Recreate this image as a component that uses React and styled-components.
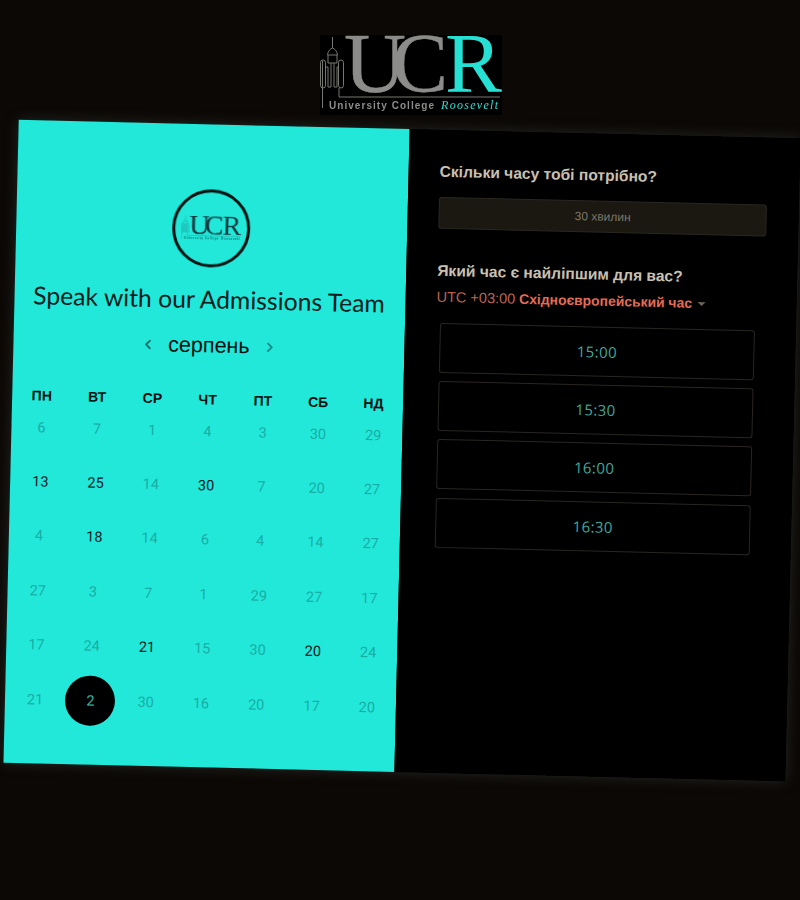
import React from "react";
import styled, { createGlobalStyle } from 'styled-components';
import { ChevronLeft, ChevronRight } from 'lucide-react';

const GlobalStyle = createGlobalStyle`
html, body {
    margin: 0;
    height: 900px;
    overflow: hidden;
    background: #0b0805;
    font-family: "Liberation Sans", Arial, sans-serif;
}
`;

// Page
const StyledPage = styled.div`
    display: flex;
    flex-direction: column;
    align-items: flex-start;
    padding-top: 35px;
`;
const StyledLogoBar = styled.div`
    display: flex;
    width: 182px;
    height: 80px;
    margin-left: 320px;
    background: #000;
    filter: blur(0.4px);
`;
const StyledCard = styled.div`
    display: flex;
    width: 782px;
    height: 643px;
    margin: 13.6px 0 0 11px;
    transform: rotate(1.36deg);
    box-shadow: 0 0 14px rgba(70, 78, 76, 0.45);
`;

// Left panel
const StyledCalendarPanel = styled.div`
    display: flex;
    flex-direction: column;
    align-items: center;
    box-sizing: border-box;
    width: 391px;
    padding: 65px 2px 0;
    background: #22e8da;
`;
const StyledBadge = styled.div`
    display: flex;
    align-items: center;
    justify-content: center;
    box-sizing: border-box;
    width: 78px;
    height: 78px;
    margin-right: 2px;
    border: 3px solid #04110f;
    border-radius: 50%;
    filter: blur(0.3px);
`;
const StyledTitle = styled.h1`
    margin: 17px 2px 0 0;
    font-family: Lato, sans-serif;
    font-size: 24.7px;
    font-weight: 400;
    line-height: 30px;
    white-space: nowrap;
    color: #07201f;
`;
const StyledMonthRow = styled.div`
    display: flex;
    align-items: center;
    gap: 12.5px;
    height: 28px;
    margin: 17px 0 35px;
`;
const StyledArrow = styled.span`
    display: flex;
    color: ${props => props.$faded ? '#128f86' : '#0f6f69'};
`;
const StyledMonth = styled.span`
    font-size: 21.5px;
    color: #04100f;
`;
const StyledGrid = styled.div`
    display: grid;
    grid-template-columns: repeat(7, 55.3px);
    justify-items: center;
    align-items: center;
    grid-auto-rows: ${props => props.$rowHeight}px;
`;
const StyledDayGrid = styled(StyledGrid)`
    margin-left: 1px;
`;
const StyledWeekday = styled.span`
    font-size: 14px;
    font-weight: 700;
    color: #04100f;
`;
const StyledDay = styled.span`
    display: flex;
    align-items: center;
    justify-content: center;
    width: 50px;
    height: 50px;
    border-radius: 50%;
    font-family: Roboto, sans-serif;
    font-size: 14.5px;
    background: ${props => props.$selected ? '#000' : 'transparent'};
    color: ${props => props.$selected ? '#38b3a8' : props.$active ? '#04201f' : '#17aea5'};
`;

// Right panel
const StyledTimePanel = styled.div`
    box-sizing: border-box;
    width: 391px;
    padding: 32px 32px 0 31px;
    background: #000;
`;
const StyledQuestion = styled.h2`
    margin: ${props => props.$top || 0}px 0 0;
    font-size: 15.6px;
    font-weight: 700;
    line-height: 20px;
    color: #c9c0b2;
`;
const StyledDuration = styled.div`
    display: flex;
    align-items: center;
    justify-content: center;
    box-sizing: border-box;
    height: 32px;
    margin-top: 14.5px;
    border: 1px solid #2b2720;
    border-radius: 3px;
    background: #1b1812;
    font-size: 12px;
    color: #7d7567;
`;
const StyledZone = styled.div`
    display: flex;
    align-items: center;
    height: 20px;
    margin-top: 5.5px;
    font-size: 14.5px;
    color: #bd6452;
`;
const StyledZoneName = styled.b`
    margin-left: 4px;
    font-size: 13.9px;
    color: #e46c55;
`;
const StyledCaret = styled.i`
    width: 0;
    height: 0;
    margin: 2px 0 0 6px;
    border: 4px solid transparent;
    border-top-color: #6c6458;
    border-bottom: 0;
`;
const StyledSlots = styled.div`
    display: flex;
    flex-direction: column;
    gap: 8.4px;
    width: 315px;
    margin: 16px 0 0 4px;
`;
const StyledSlot = styled.div`
    display: flex;
    align-items: center;
    justify-content: center;
    box-sizing: border-box;
    height: 50px;
    border: 1px solid #2a2620;
    border-radius: 3px;
    font-family: "Open Sans", sans-serif;
    font-size: 15px;
    letter-spacing: 0.4px;
    color: #3fa99b;
`;

// Data
const weekdays = ['ПН', 'ВТ', 'СР', 'ЧТ', 'ПТ', 'СБ', 'НД'];
const days = [
    [6], [7], [1], [4], [3], [30], [29],
    [13, 'a'], [25, 'a'], [14], [30, 'a'], [7], [20], [27],
    [4], [18, 'a'], [14], [6], [4], [14], [27],
    [27], [3], [7], [1], [29], [27], [17],
    [17], [24], [21, 'a'], [15], [30], [20, 'a'], [24],
    [21], [2, 's'], [30], [16], [20], [17], [20],
];
const slots = ['15:00', '15:30', '16:00', '16:30'];

// Crest drawing + wordmark, shared by the header logo and the round badge
function Logo({ width, ink, accent, tower, tag }) {
    const serif = "Liberation Serif, serif";
    return (
        <svg width={width} height={width * 80 / 182} viewBox="0 0 182 80">
            <g fill="none" stroke={tower} strokeWidth="1">
                <path d="M12.5 2V13M7.5 20C8 16 10 14 12.5 13C15 14 17 16 17.5 20ZM2.5 26V73" />
                <rect x="0.5" y="25" width="5" height="28" rx="2.5" />
                <rect x="18.5" y="25" width="5" height="28" rx="2.5" />
                <path d="M5.5 32H8V52H11V28M14 28V52H17V32H18.5M8 20V28H17V20M19 53V62H180" />
            </g>
            <text x="24" y="57" fontFamily={serif} fontSize="85" fill={ink} stroke={ink} strokeWidth="0.5" textLength="62" lengthAdjust="spacingAndGlyphs">U</text>
            <text x="72" y="57" fontFamily={serif} fontSize="85" fill={ink} stroke={ink} strokeWidth="0.5" textLength="56" lengthAdjust="spacingAndGlyphs">C</text>
            <text x="125" y="57" fontFamily={serif} fontSize="85" fill={accent} textLength="57" lengthAdjust="spacingAndGlyphs">R</text>
            <text x="9" y="74" fontFamily="Liberation Sans, sans-serif" fontSize="10" fontWeight="700" letterSpacing="0.9" fill={tag} textLength="106">University College</text>
            <text x="121" y="74" fontFamily={serif} fontSize="12" fontStyle="italic" letterSpacing="1" fill={accent} textLength="58">Roosevelt</text>
        </svg>
    );
}

function App() {
    return (
        <StyledPage>
            <GlobalStyle />
            <StyledLogoBar>
                <Logo width={182} ink="#8c8c8a" accent="#27e0d4" tower="#77776f" tag="#8c8c8a" />
            </StyledLogoBar>
            <StyledCard>
                <StyledCalendarPanel>
                    <StyledBadge>
                        <Logo width={60} ink="#0b3a40" accent="#0b3a40" tower="#1a8d86" tag="#127a76" />
                    </StyledBadge>
                    <StyledTitle>Speak with our Admissions Team</StyledTitle>
                    <StyledMonthRow>
                        <StyledArrow><ChevronLeft size={15} strokeWidth={3} /></StyledArrow>
                        <StyledMonth>серпень</StyledMonth>
                        <StyledArrow $faded><ChevronRight size={15} strokeWidth={3} /></StyledArrow>
                    </StyledMonthRow>
                    <StyledGrid $rowHeight={10}>
                        {weekdays.map(name => <StyledWeekday key={name}>{name}</StyledWeekday>)}
                    </StyledGrid>
                    <StyledDayGrid $rowHeight={54.4}>
                        {days.map(([value, state], i) => (
                            <StyledDay key={i} $active={state === 'a'} $selected={state === 's'}>{value}</StyledDay>
                        ))}
                    </StyledDayGrid>
                </StyledCalendarPanel>
                <StyledTimePanel>
                    <StyledQuestion>Скільки часу тобі потрібно?</StyledQuestion>
                    <StyledDuration>30 хвилин</StyledDuration>
                    <StyledQuestion $top={32.5}>Який час є найліпшим для вас?</StyledQuestion>
                    <StyledZone>
                        UTC +03:00
                        <StyledZoneName>Східноєвропейський час</StyledZoneName>
                        <StyledCaret />
                    </StyledZone>
                    <StyledSlots>
                        {slots.map(time => <StyledSlot key={time}>{time}</StyledSlot>)}
                    </StyledSlots>
                </StyledTimePanel>
            </StyledCard>
        </StyledPage>
    );
}

export default App;
